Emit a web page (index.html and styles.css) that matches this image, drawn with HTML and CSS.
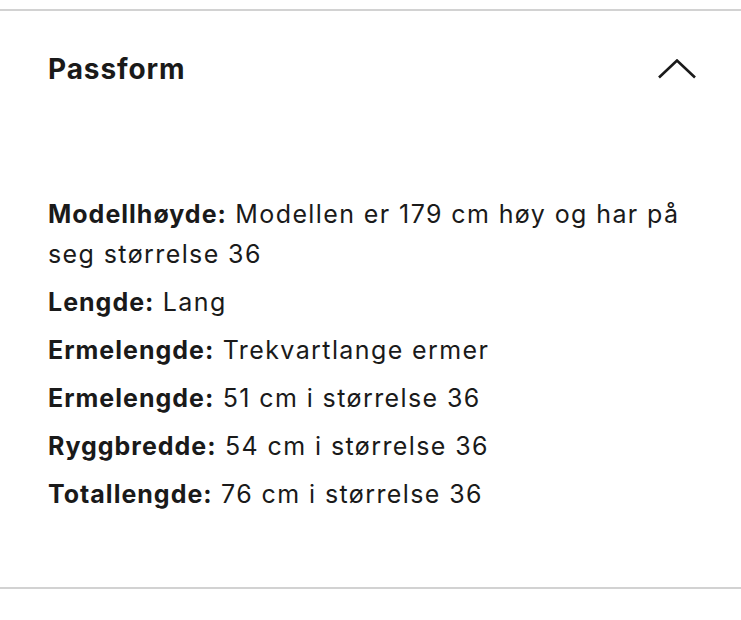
FILE: index.html
```html
<!DOCTYPE html>
<html lang="no">
<head>
<meta charset="utf-8">
<link rel="stylesheet" href="styles.css">
</head>
<body>
<section class="accordion">
  <div class="header">
    <h2 class="title">Passform</h2>
    <svg class="chevron" width="40" height="20" viewBox="0 0 40 20" aria-hidden="true">
      <polyline points="2,18.5 20,1.5 38,18.5" fill="none" stroke="#1a1a1a" stroke-width="2.6" stroke-linecap="butt" stroke-linejoin="miter"/>
    </svg>
  </div>
  <ul class="details">
    <li><b>Modellhøyde:</b> Modellen er 179 cm høy og har på seg størrelse 36</li>
    <li><b>Lengde:</b> Lang</li>
    <li><b>Ermelengde:</b> Trekvartlange ermer</li>
    <li><b>Ermelengde:</b> 51 cm i størrelse 36</li>
    <li><b>Ryggbredde:</b> 54 cm i størrelse 36</li>
    <li><b>Totallengde:</b> 76 cm i størrelse 36</li>
  </ul>
</section>
</body>
</html>
```
FILE: styles.css
```css
html, body {
  margin: 0;
  padding: 0;
  background: #ffffff;
}
body {
  font-family: Inter, "Liberation Sans", Arial, sans-serif;
  color: #1a1a1a;
}
.accordion {
  margin-top: 9px;
  border-top: 2px solid #d2d2d2;
  border-bottom: 2px solid #d2d2d2;
  padding: 0 44px 0 48px;
}
.header {
  display: flex;
  align-items: center;
  justify-content: space-between;
  height: 116px;
}
.title {
  margin: 0;
  font-size: 28px;
  font-weight: 700;
  letter-spacing: 0.9px;
}
.chevron {
  display: block;
}
.details {
  list-style: none;
  margin: 0;
  padding: 67px 0 65px 0;
  font-size: 25px;
  line-height: 40px;
  letter-spacing: 1.4px;
}
.details li {
  margin: 0 0 8px 0;
}
.details b {
  font-weight: 700;
  letter-spacing: 1px;
}
```
